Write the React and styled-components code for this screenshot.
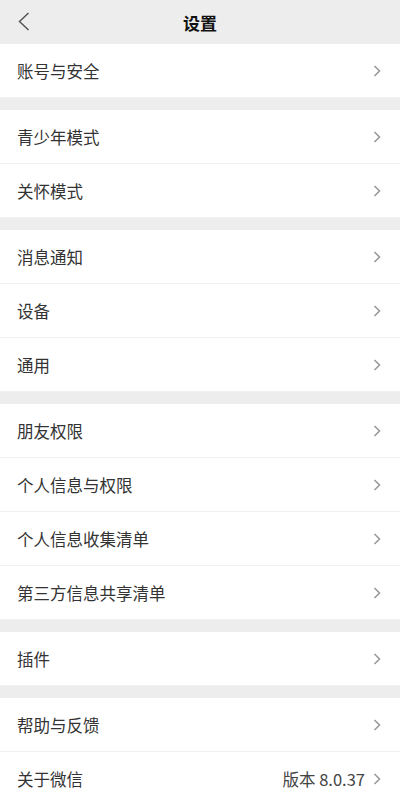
import styled, {createGlobalStyle} from 'styled-components';

const GlobalStyle = createGlobalStyle`
  html, body {
    margin: 0;
    padding: 0;
    background: #ededed;
  }
  body {
    font-family: "Noto Sans CJK SC", "Noto Sans", sans-serif;
  }
`;

const groups = [
  ['账号与安全'],
  ['青少年模式', '关怀模式'],
  ['消息通知', '设备', '通用'],
  ['朋友权限', '个人信息与权限', '个人信息收集清单', '第三方信息共享清单'],
  ['插件'],
  ['帮助与反馈', {label: '关于微信', value: '版本 8.0.37'}],
];

export default function App() {
  return (
    <Page>
      <GlobalStyle />
      <Header>
        <BackButton aria-label="返回">
          <svg width="12" height="20" viewBox="0 0 12 20">
            <polyline
              points="10.5,1 1.5,9.5 10.5,18"
              fill="none"
              stroke="#555"
              strokeWidth="1.5"
            />
          </svg>
        </BackButton>
        <Title>设置</Title>
      </Header>
      <List>
        {groups.map((items, i) => (
          <Group key={i}>
            {items.map(item => {
              const label = typeof item === 'string' ? item : item.label;
              const value = typeof item === 'string' ? null : item.value;
              return (
                <Row key={label}>
                  <Label>{label}</Label>
                  {value && <Value>{value}</Value>}
                  <Chevron width="8" height="12" viewBox="0 0 8 12">
                    <polyline
                      points="1.5,1 6.5,6 1.5,11"
                      fill="none"
                      stroke="#9a9a9a"
                      strokeWidth="1.6"
                    />
                  </Chevron>
                </Row>
              );
            })}
          </Group>
        ))}
      </List>
    </Page>
  );
}

const Page = styled.div`
  width: 400px;
  min-height: 800px;
  background: #ededed;
`;

const Header = styled.header`
  position: relative;
  height: 44px;
  display: flex;
  align-items: center;
  justify-content: center;
  background: #ededed;
`;

const BackButton = styled.button`
  position: absolute;
  left: 18px;
  top: 12px;
  padding: 0;
  border: 0;
  background: none;
  display: flex;
`;

const Title = styled.h1`
  margin: 0;
  font-size: 17px;
  font-weight: 700;
  color: #111;
`;

const List = styled.div`
  display: flex;
  flex-direction: column;
  gap: 12px;
`;

const Group = styled.section`
  background: #fff;
  display: flex;
  flex-direction: column;
`;

const Row = styled.div`
  height: 54px;
  box-sizing: border-box;
  display: flex;
  align-items: center;
  padding: 0 19px 0 17px;
  border-bottom: 1px solid #f2f2f2;
`;

const Label = styled.span`
  flex: 1;
  font-size: 16.5px;
  color: #333;
`;

const Value = styled.span`
  font-size: 16.5px;
  color: #444;
  margin-right: 8px;
`;

const Chevron = styled.svg`
  flex-shrink: 0;
`;
